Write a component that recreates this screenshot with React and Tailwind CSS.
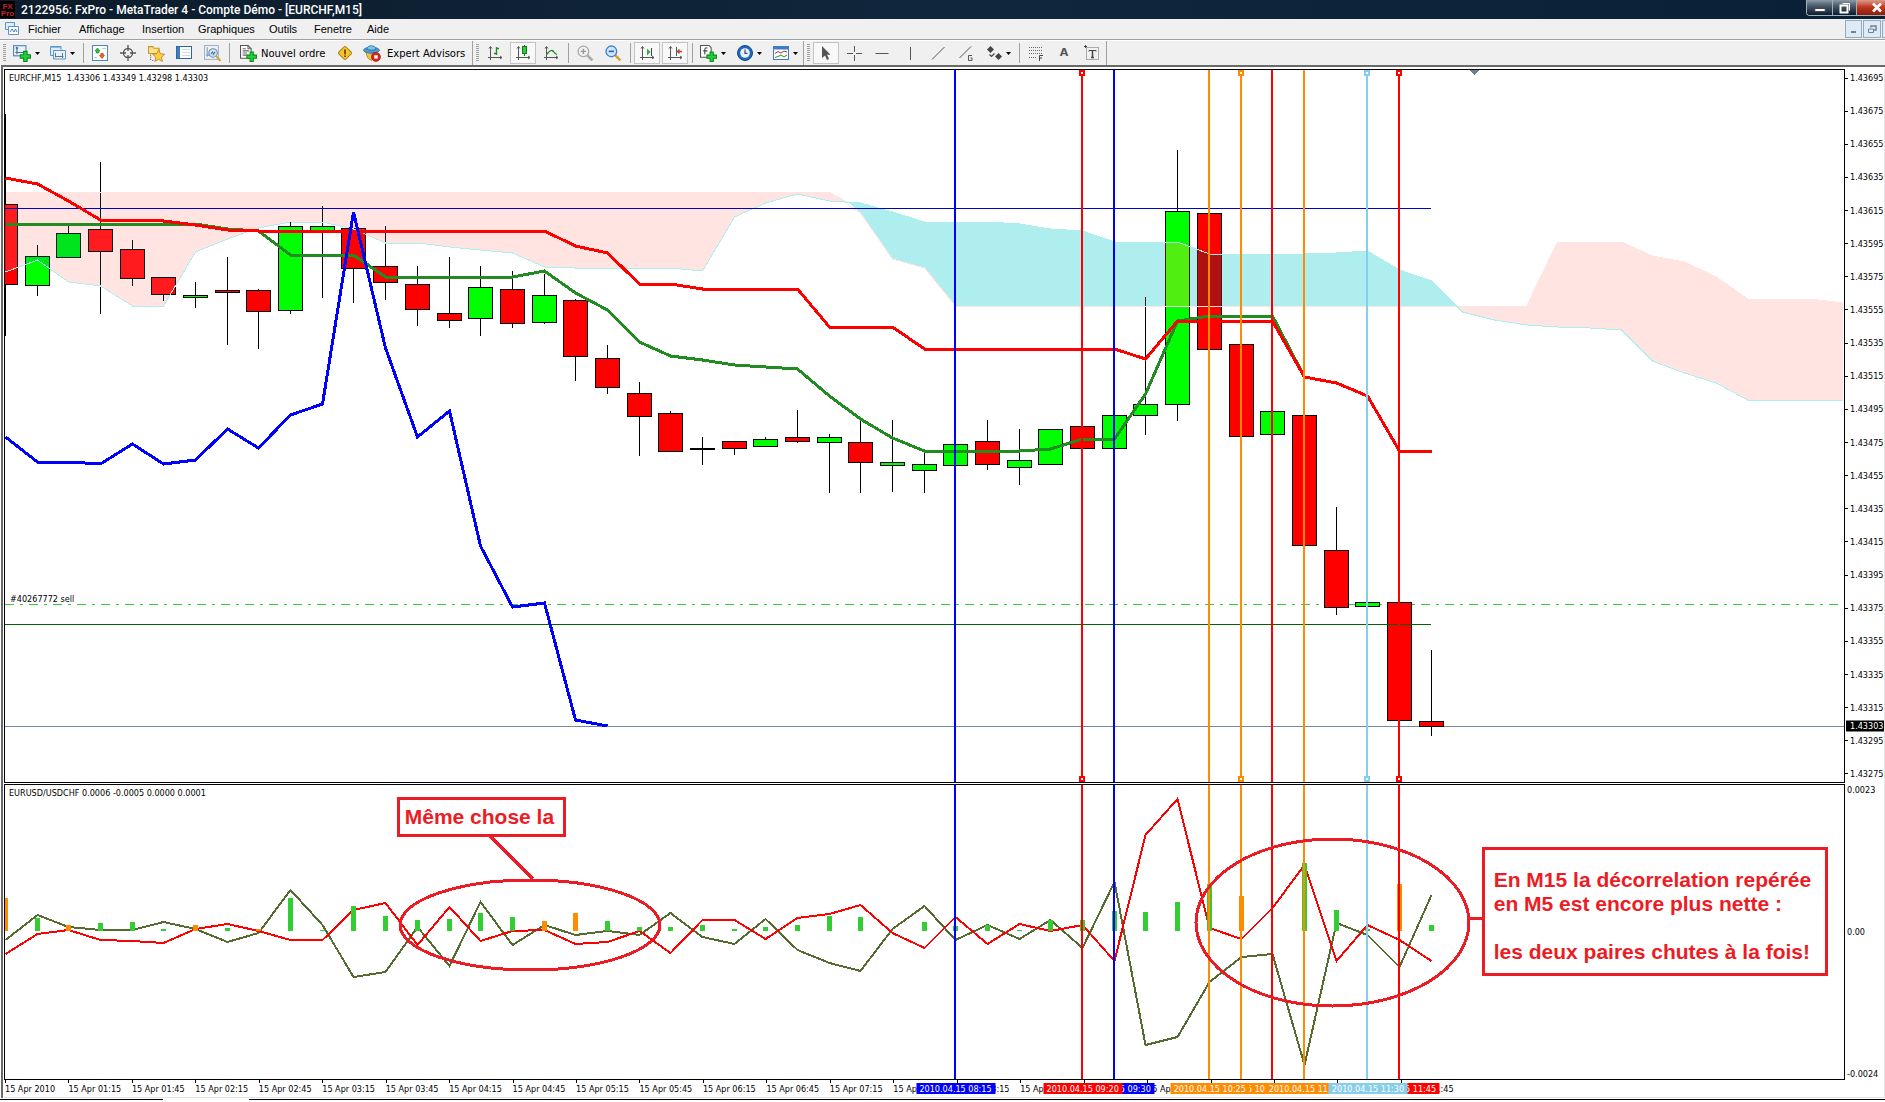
import clsx from "clsx";

const BAR_START = 5.5;
const BAR_STEP = 31.68;
const PLOT_LEFT = 5;
const PLOT_WIDTH = 1839;

const barX = (index) => Math.round(BAR_START + BAR_STEP * index - 0.5) + 0.5;
const leftPercent = (x) => `${((x - PLOT_LEFT) / PLOT_WIDTH) * 100}%`;
const toPoints = (values, start = 0) => values.map((y, i) => `${barX(i + start)},${y}`).join(" ");

const UP = "#00ff00";
const DOWN = "#ff0000";

// [open/close top, open/close bottom, high, low, color]
const candles = [
  [204.5, 284.5, 114, 336, DOWN],
  [256.5, 285.5, 245, 296, UP],
  [233.5, 257.5, 226, 257, UP],
  [229.5, 251.5, 162, 314, DOWN],
  [249.5, 278.5, 240, 286, DOWN],
  [277.5, 294.5, 277, 301, DOWN],
  [295.5, 297.5, 282, 308, UP],
  [290.5, 292.5, 257, 345, DOWN],
  [290.5, 311.5, 289, 349, DOWN],
  [226.5, 310.5, 222, 314, UP],
  [226.5, 231.5, 206, 298, UP],
  [228.5, 268.5, 228, 303, DOWN],
  [266.5, 282.5, 226, 300, DOWN],
  [284.5, 309.5, 266, 326, DOWN],
  [313.5, 320.5, 257, 328, DOWN],
  [287.5, 318.5, 266, 336, UP],
  [289.5, 323.5, 271, 328, DOWN],
  [295.5, 322.5, 274, 324, UP],
  [300.5, 356.5, 299, 381, DOWN],
  [358.5, 387.5, 345, 394, DOWN],
  [393.5, 416.5, 382, 456, DOWN],
  [413.5, 451.5, 411, 451, DOWN],
  [448.5, 449.5, 437, 465, UP],
  [441.5, 448.5, 441, 455, DOWN],
  [439.5, 446.5, 437, 446, UP],
  [437.5, 441.5, 410, 443, DOWN],
  [437.5, 442.5, 434, 493, UP],
  [442.5, 462.5, 420, 493, DOWN],
  [462.5, 465.5, 420, 492, UP],
  [464.5, 470.5, 452, 493, UP],
  [444.5, 465.5, 444, 465, UP],
  [441.5, 464.5, 420, 470, DOWN],
  [460.5, 467.5, 429, 485, UP],
  [429.5, 464.5, 429, 464, UP],
  [426.5, 448.5, 426, 448, DOWN],
  [415.5, 448.5, 415, 448, UP],
  [404.5, 415.5, 297, 435, UP],
  [211.5, 404.5, 150, 421, UP],
  [213.5, 349.5, 213, 349, DOWN],
  [344.5, 436.5, 344, 436, DOWN],
  [411.5, 434.5, 411, 434, UP],
  [415.5, 545.5, 415, 545, DOWN],
  [550.5, 607.5, 507, 615, DOWN],
  [602.5, 606.5, 602, 606, UP],
  [602.5, 720.5, 602, 720, DOWN],
  [721.5, 726.5, 650, 736, DOWN],
];

const spanA = [
  272, 260, 282, 286, 306, 306, 252, 239, 228, 222, 222, 229, 243, 243, 247, 250, 253, 267, 268, 268, 268, 268, 271,
  217, 203, 194, 201, 203, 212, 222, 222, 222, 224, 229, 231, 242, 242, 242, 254, 254, 254, 254, 253, 251, 270, 281,
  312, 320, 325, 327, 328, 330, 361, 373, 383, 400, 400, 400, 400,
];
const spanB = [
  ...Array(27).fill(192), 213, 259, 268, ...Array(19).fill(306), 242, 242, 242, 256, 262, 277, 299, 299, 299, 303,
];

const reversed = (values, from, to) =>
  values
    .map((y, i) => `${barX(i)},${y}`)
    .slice(from, to)
    .reverse()
    .join(" ");

const cloudDownLeft = `${toPoints(spanB.slice(0, 27))} 848,202 ${reversed(spanA, 0, 27)}`;
const cloudUp = `848,202 ${toPoints(spanA.slice(27, 46), 27)} 1455,306 ${reversed(spanB, 27, 46)}`;
const cloudDownRight = `1455,306 ${toPoints(spanB.slice(46), 46)} ${reversed(spanA, 46, 59)}`;

const kijun = [
  178, 184, 201, 220, 220, 221, 225, 230, ...Array(10).fill(231), 246, 253, 284, 284, 289, 289, 289, 289, 327, 327, 327,
  ...Array(7).fill(349), 359, 321, 321, 321, 321, 377, 383, 396, 451, 451,
];
const tenkan = [
  ...Array(7).fill(224), 229, 231, 255, 255, 255, ...Array(5).fill(277), 271, 293, 310, 342, 356, 360, 365, 367, 369,
  396, 419, 438, 451, 451, 451, 451, 449, 439, 439, 394, 321, 316, 316, 316, 377,
];
const chikou = [437, 462, 462, 464, 444, 464, 460, 429, 448, 415, 404, 212, 348, 437, 411, 546, 607, 603, 720, 726];

const eurusd = [
  954, 934, 930, 940, 941, 943, 929, 924, 931, 940, 940, 910, 903, 945, 907, 941, 931, 930, 944, 942, 931, 953, 920,
  920, 939, 918, 914, 905, 933, 948, 917, 944, 924, 931, 925, 961, 835, 799, 928, 939, 908, 865, 961, 925, 940, 961,
];
const usdchf = [
  940, 915, 927, 930, 930, 922, 929, 942, 933, 890, 925, 977, 972, 927, 966, 902, 945, 925, 935, 931, 935, 913, 937,
  944, 919, 950, 963, 971, 929, 906, 940, 925, 939, 920, 948, 882, 1045, 1037, 982, 957, 954, 1065, 923, 935, 967, 895,
];

const ZERO_Y = 931;
const histogram = [
  898, 918, 925, 923, 922, 929, 925, 928, 929, 898, 930, 906, 916, 920, 919, 913, 917, 921, 913, 921, 927, 927, 925,
  929, 927, 925, 916, 917, 931, 922, 926, 925, 930, 920, 920, 911, 912, 902, 884, 896, 931, 863, 910, 929, 884, 925,
];
const orangeBars = [0, 2, 6, 8, 17, 18, 39, 44];

const verticals = [
  { bar: 44, color: "#ff0000", tag: "bg-[#ff0000]", label: "2010.04.15 11:45", handle: true },
  { bar: 35, color: "#0000ff", tag: "bg-[#0000ff]", label: "2010.04.15 09:30" },
  { bar: 40, color: "#ff0000", tag: "bg-[#ff0000]", label: "2010.04.15 10:45" },
  { bar: 39, color: "#ff8c00", tag: "bg-[#ff8c00]", label: "2010.04.15 10:30", handle: true },
  { bar: 30, color: "#0000ff", tag: "bg-[#0000ff]", label: "2010.04.15 08:15" },
  { bar: 34, color: "#ff0000", tag: "bg-[#ff0000]", label: "2010.04.15 09:20", handle: true },
  { bar: 38, color: "#ff8c00", tag: "bg-[#ff8c00]", label: "2010.04.15 10:25" },
  { bar: 41, color: "#ff8c00", tag: "bg-[#ff8c00]", label: "2010.04.15 11:00" },
  { bar: 43, color: "#87ceeb", tag: "bg-[#87ceeb]", label: "2010.04.15 11:30", handle: true },
];

const priceLabels = Array.from({ length: 22 }, (_, i) => (1.43695 - i * 0.0002).toFixed(5));

const timeLabels = Array.from({ length: 23 }, (_, i) => {
  if (i === 0) return "15 Apr 2010";
  const minutes = 45 + i * 30;
  return `15 Apr ${String(Math.floor(minutes / 60)).padStart(2, "0")}:${String(minutes % 60).padStart(2, "0")}`;
});

const menuItems = [
  { label: "Fichier", width: "w-[51px]" },
  { label: "Affichage", width: "w-[63px]" },
  { label: "Insertion", width: "w-14" },
  { label: "Graphiques", width: "w-[71px]" },
  { label: "Outils", width: "w-[45px]" },
  { label: "Fenetre", width: "w-[53px]" },
  { label: "Aide", width: "w-10" },
];

function Svg({ size = 16, children, ...props }) {
  return (
    <svg width={size} height={size} viewBox="0 0 16 16" fill="none" className="shrink-0" aria-hidden="true" {...props}>
      {children}
    </svg>
  );
}

const Plus = ({ x = 6, y = 6 }) => (
  <path
    transform={`translate(${x} ${y})`}
    d="M3.5 .5h3v3h3v3h-3v3h-3v-3h-3v-3h3z"
    fill="#22d43a"
    stroke="#0a8a1c"
  />
);

const NewChartIcon = () => (
  <Svg size={18}>
    <rect x=".5" y="1.5" width="11" height="9" fill="#eaf3fb" stroke="#4b86bd" />
    <path d="M3.5 3v6M2 7.5h8M2.500 4l1-1 1 1" stroke="#4b6f96" />
    <Plus />
  </Svg>
);

const ProfilesIcon = () => (
  <Svg>
    <path d="M.5 1.500h10.500v9H.5z" fill="#dcecf9" stroke="#5d93c6" />
    <path d="M.5 2.500h10.500" stroke="#8db9e0" />
    <path d="M3.500 5.500h12v8.500h-12z" fill="#eaf3fb" stroke="#5d93c6" />
    <path d="M5.500 12.500V8M5 11.500h8.500M12.500 13V8" stroke="#55789e" />
  </Svg>
);

const MarketIcon = () => (
  <Svg>
    <rect x=".5" y=".5" width="15" height="15" fill="#fff" stroke="#4b86bd" />
    <path d="M3 6L5.500 3l2.500 3H6.800V8H4.300V6z" fill="#2fbf3c" stroke="#14791f" strokeWidth=".6" />
    <path d="M7.500 10.500L10 13.500l2.500-3h-1.200V8.500H8.800v2z" fill="#f0602c" stroke="#a93410" strokeWidth=".6" />
    <path d="M10 3.500h4M2 12.500h3" stroke="#b9c9d8" />
  </Svg>
);

const CrosshairIcon = () => (
  <Svg>
    <circle cx="8" cy="8" r="4.500" stroke="#555" strokeWidth="1.300" />
    <path d="M8 0v6M8 10v6M0 8h6M10 8h6" stroke="#555" strokeWidth="1.300" />
  </Svg>
);

const NavigatorIcon = () => (
  <Svg size={17}>
    <path d="M.5 2.500V1.500h4l1 1.500h5v5H.5z" fill="#ffe08a" stroke="#c99a2c" />
    <path d="M2.500 9v6M4 14.500h2" stroke="#666" strokeDasharray="1 1" />
    <path d="M10 4.500l1.700 3.700 4 .5-3 2.700.8 4-3.500-2-3.500 2 .8-4-3-2.700 4-.5z" fill="#ffcf3f" stroke="#b8831a" strokeWidth=".8" />
  </Svg>
);

const TerminalIcon = () => (
  <Svg>
    <rect x=".5" y="1.500" width="15" height="12" fill="#fff" stroke="#2d65a8" />
    <rect x="1" y="2" width="3" height="11" fill="#3f7cc4" />
    <path d="M6 4.500h8M6 7.500h8M6 10.500h8" stroke="#c9d9e8" />
  </Svg>
);

const TesterIcon = () => (
  <Svg size={17}>
    <rect x=".5" y=".5" width="13" height="13" fill="#eef4fa" stroke="#9db4c9" />
    <path d="M3 2v9M2 9.500h9" stroke="#7c96ae" />
    <circle cx="8.500" cy="7.500" r="4" fill="#c6def2" fillOpacity=".8" stroke="#6f8da8" />
    <path d="M6.500 8.500l1.500-2 1 2 1.500-2" stroke="#4c7297" />
    <path d="M11.500 10.500l4 4.500" stroke="#d9a43c" strokeWidth="2" />
  </Svg>
);

const OrderIcon = () => (
  <Svg size={17}>
    <path d="M.5.5h7l3 3v9h-10z" fill="#fff" stroke="#555" />
    <path d="M7.500.5v3h3M2.500 3.500h3M2.500 5.500h6M2.500 7.500h4M2.500 9.500h4" stroke="#666" />
    <Plus />
  </Svg>
);

const WarningIcon = () => (
  <Svg>
    <rect x="3" y="3" width="10" height="10" rx="1.500" transform="rotate(45 8 8)" fill="#f6c52e" stroke="#a8780f" />
    <path d="M8 4.500v5M8 10.500v1.500" stroke="#5a3f05" strokeWidth="1.600" />
  </Svg>
);

const ExpertIcon = () => (
  <Svg size={18}>
    <path d="M2.500 6.500c1 6 2.500 7.500 5.500 8l4-5z" fill="#f3c443" stroke="#a97c18" strokeWidth=".7" />
    <ellipse cx="7.500" cy="5.500" rx="7" ry="2.700" fill="#4a9bd3" stroke="#2a6d9f" strokeWidth=".7" />
    <path d="M3.500 4.500c0-4 7.500-4 8 0-2 1.300-6 1.300-8 0z" fill="#7fc1ea" stroke="#2a6d9f" strokeWidth=".7" />
    <circle cx="11.500" cy="11.500" r="4" fill="#d9261c" stroke="#94130c" strokeWidth=".6" />
    <rect x="10" y="10" width="3" height="3" fill="#fff" />
  </Svg>
);

function ChartAxes() {
  return <path d="M3.500 2v13M1 12.500h14M2 3.500l1.500-2 1.500 2M13 11l2 1.500-2 1.500" stroke="#555" />;
}

const BarChartIcon = () => (
  <Svg>
    <ChartAxes />
    <path d="M9.500 2v8M9.500 3.500h2.500M7 8.500h2.500" stroke="#1c8c26" strokeWidth="1.400" />
  </Svg>
);

const CandleChartIcon = () => (
  <Svg>
    <ChartAxes />
    <path d="M9.500 0v11" stroke="#147a1e" />
    <rect x="7.500" y="1.500" width="4" height="7" fill="#2fcf3c" stroke="#147a1e" />
  </Svg>
);

const LineChartIcon = () => (
  <Svg>
    <ChartAxes />
    <path d="M3.500 9.500C6 7 7 5 9 5.500S11 8.500 14 9.500" stroke="#1c8c26" strokeWidth="1.300" />
  </Svg>
);

const ZoomInIcon = () => (
  <Svg size={17}>
    <path d="M9.500 9.500l5 5" stroke="#aaa" strokeWidth="2.500" />
    <circle cx="6" cy="6" r="5" fill="#f0f0f0" stroke="#a8a8a8" strokeWidth="1.200" />
    <path d="M3.500 6h5M6 3.500v5" stroke="#999" strokeWidth="1.400" />
  </Svg>
);

const ZoomOutIcon = () => (
  <Svg size={17}>
    <path d="M9.500 9.500l5 5" stroke="#d8a430" strokeWidth="2.500" />
    <circle cx="6" cy="6" r="5" fill="#cfe6fa" stroke="#3d84cf" strokeWidth="1.300" />
    <path d="M3.500 6h5" stroke="#2b6cb5" strokeWidth="1.600" />
  </Svg>
);

const AutoScrollIcon = () => (
  <Svg>
    <ChartAxes />
    <path d="M8 3.500v7l3.500-3.500z" fill="#2fae3a" />
    <path d="M12.500 3v8" stroke="#444" />
  </Svg>
);

const ChartShiftIcon = () => (
  <Svg>
    <ChartAxes />
    <path d="M9.500 2v9" stroke="#33628f" />
    <path d="M15 6.500h-4M12.500 4.500l-2 2 2 2" stroke="#c4451c" strokeWidth="1.300" />
  </Svg>
);

const IndicatorsIcon = () => (
  <Svg size={17}>
    <path d="M.5.500h8l2 2v9h-10z" fill="#fff" stroke="#555" />
    <path d="M7 3c-2-1-2.500 0-2.500 2v4M3 5.500h4" stroke="#444" />
    <Plus />
  </Svg>
);

const PeriodIcon = () => (
  <Svg>
    <circle cx="8" cy="8" r="7.500" fill="#1f67bd" stroke="#164a8c" />
    <circle cx="8" cy="8" r="4.800" fill="#e8f3fc" />
    <path d="M8 4.500V8.300h2.500" stroke="#35506e" strokeWidth="1.200" />
  </Svg>
);

const TemplateIcon = () => (
  <Svg>
    <rect x=".5" y="1.500" width="15" height="13" fill="#fff" stroke="#3f7cc4" />
    <path d="M1 3h14" stroke="#3f7cc4" strokeWidth="3" />
    <path d="M2 8.500l3-2 3 1.500 3-2 3 1" stroke="#a3352a" />
    <path d="M2 12.500l3-1 3-1.500 3 2 3-2" stroke="#2d8b38" />
  </Svg>
);

const CursorIcon = () => (
  <Svg>
    <path d="M4 1v12l3-2.500 2 4.500 2-1-2-4.200h3.500z" fill="#555" />
  </Svg>
);

const CrossIcon = () => (
  <Svg>
    <path d="M8.500 1v6M8.500 10v6M1 8.500h6M10 8.500h6" stroke="#555" />
  </Svg>
);

const HLineIcon = () => (
  <Svg>
    <path d="M1.500 8.500h13" stroke="#555" />
  </Svg>
);

const VLineIcon = () => (
  <Svg>
    <path d="M8.500 2v13" stroke="#555" />
  </Svg>
);

const TrendIcon = () => (
  <Svg>
    <path d="M2 14.500L14.500 2" stroke="#555" />
  </Svg>
);

const ChannelIcon = () => (
  <Svg>
    <path d="M1.500 13L13 1.500" stroke="#555" />
    <path d="M14 10.500h-3.500v5H14V13h-1.500" stroke="#555" />
  </Svg>
);

const ArrowsIcon = () => (
  <Svg>
    <path d="M4.500 1L8 4.500 4.500 8 1 4.500z" fill="#444" />
    <path d="M12.500 8L16 11.500 12.500 15 9 11.500z" fill="#444" />
    <path d="M3.500 9.500l2 2 3-3" stroke="#444" strokeWidth="1.200" />
  </Svg>
);

const FiboIcon = () => (
  <Svg>
    <path d="M1 2.500h14M1 5.500h14M1 8.500h14M1 12.500h8" stroke="#666" strokeDasharray="1 1" />
    <path d="M11.500 16v-5.500H15M11.500 13H14" stroke="#444" />
  </Svg>
);

const LabelIcon = () => (
  <Svg>
    <rect x="2.500" y="2.500" width="12" height="12" stroke="#666" strokeDasharray="1 1" />
    <path d="M5 6.500V5.500h7v1" stroke="#444" />
    <path d="M8.500 5.500v7M7 12.500h3" stroke="#444" strokeWidth="1.500" />
    <path d="M0 1.500h3M1.500 0v3" stroke="#444" />
  </Svg>
);

const Caret = () => (
  <svg width="5" height="3" viewBox="0 0 5 3" className="shrink-0" aria-hidden="true">
    <path d="M0 0h5L2.500 3z" fill="#000" />
  </svg>
);

function ToolButton({ label, icon, pressed = false, menu = false }) {
  return (
    <button
      type="button"
      aria-label={label}
      aria-pressed={pressed}
      className={clsx("flex h-[22px] shrink-0 items-center justify-center", menu ? "w-9 gap-1" : "w-7")}
    >
      {pressed ? (
        <span className="flex h-[22px] w-[26px] items-center justify-center border border-[#c4c4c4] bg-[#f8f8f8]">
          {icon}
        </span>
      ) : (
        icon
      )}
      {menu && <Caret />}
    </button>
  );
}

const Separator = () => (
  <span className="flex w-1.5 shrink-0 justify-center">
    <span className="h-5 w-px bg-[#a0a0a0]" />
  </span>
);

const Grip = () => (
  <span className="flex w-2 shrink-0 justify-center">
    <span className="h-[18px] w-[3px] bg-[repeating-linear-gradient(to_bottom,#a0a0a0_0_1px,#f0f0f0_1px_2px)]" />
  </span>
);

function ToolbarGroup({ label, children }) {
  return (
    <div role="toolbar" aria-label={label} className="flex h-full items-center border-r border-[#a0a0a0]">
      <Grip />
      {children}
    </div>
  );
}

function Toolbar() {
  return (
    <div className="flex h-6 shrink-0 items-center overflow-hidden bg-[#f0f0f0] font-['DejaVu_Sans'] text-[10px]">
      <ToolbarGroup label="Standard">
        <ToolButton label="Nouveau graphique" icon={<NewChartIcon />} menu />
        <ToolButton label="Profils" icon={<ProfilesIcon />} menu />
        <Separator />
        <ToolButton label="Cotations" icon={<MarketIcon />} />
        <ToolButton label="Fenêtre de données" icon={<CrosshairIcon />} />
        <ToolButton label="Navigateur" icon={<NavigatorIcon />} />
        <ToolButton label="Terminal" icon={<TerminalIcon />} />
        <ToolButton label="Testeur" icon={<TesterIcon />} />
        <Separator />
        <button type="button" className="flex h-[22px] w-[99px] shrink-0 items-center gap-1 pl-2 whitespace-nowrap">
          <OrderIcon />
          Nouvel ordre
        </button>
        <ToolButton label="Alertes" icon={<WarningIcon />} />
        <button type="button" className="flex h-[22px] w-[113px] shrink-0 items-center gap-1.5 pl-1 whitespace-nowrap">
          <ExpertIcon />
          Expert Advisors
        </button>
      </ToolbarGroup>

      <ToolbarGroup label="Graphiques">
        <ToolButton label="Barres" icon={<BarChartIcon />} />
        <ToolButton label="Chandeliers" icon={<CandleChartIcon />} pressed />
        <ToolButton label="Ligne" icon={<LineChartIcon />} />
        <Separator />
        <ToolButton label="Zoom avant" icon={<ZoomInIcon />} />
        <ToolButton label="Zoom arrière" icon={<ZoomOutIcon />} />
        <Separator />
        <ToolButton label="Défilement automatique" icon={<AutoScrollIcon />} pressed />
        <ToolButton label="Décalage" icon={<ChartShiftIcon />} pressed />
        <Separator />
        <ToolButton label="Indicateurs" icon={<IndicatorsIcon />} menu />
        <ToolButton label="Périodes" icon={<PeriodIcon />} menu />
        <ToolButton label="Modèles" icon={<TemplateIcon />} menu />
      </ToolbarGroup>

      <ToolbarGroup label="Outils de dessin">
        <ToolButton label="Curseur" icon={<CursorIcon />} pressed />
        <ToolButton label="Réticule" icon={<CrossIcon />} />
        <ToolButton label="Ligne horizontale" icon={<HLineIcon />} />
        <ToolButton label="Ligne verticale" icon={<VLineIcon />} />
        <ToolButton label="Ligne de tendance" icon={<TrendIcon />} />
        <ToolButton label="Canal" icon={<ChannelIcon />} />
        <ToolButton label="Flèches" icon={<ArrowsIcon />} menu />
        <Separator />
        <ToolButton label="Fibonacci" icon={<FiboIcon />} />
        <ToolButton label="Texte" icon={<span className="text-[11px] font-bold text-[#555]">A</span>} />
        <ToolButton label="Étiquette" icon={<LabelIcon />} />
      </ToolbarGroup>
    </div>
  );
}

function TitleBar() {
  return (
    <header className="flex h-[19px] shrink-0 items-start justify-between bg-[#0b1f33] bg-linear-to-r from-[#0c1c2c] via-[#10263c] to-[#0a2036]">
      <div className="flex h-[19px] items-center gap-1.5">
        <span className="flex h-[17px] w-[15px] flex-col items-center justify-center bg-black font-['Liberation_Sans'] text-[8px] leading-[7px] font-bold text-[#c8202a]">
          <span>FX</span>
          <span>Pro</span>
        </span>
        <h1 className="font-['Roboto'] text-[12px] leading-[18px] font-medium whitespace-nowrap text-white">
          2122956: FxPro - MetaTrader 4 - Compte Démo - [EURCHF,M15]
        </h1>
      </div>
      <div className="flex h-4 overflow-hidden rounded-bl border-b border-l border-[#9fb0bf]">
        <button type="button" aria-label="Réduire" className="flex w-[26px] items-center justify-center border-r border-[#9fb0bf] bg-linear-to-b from-[#8d99a5] via-[#4a5a6a] via-40% to-[#0c1c2e]">
          <span className="mt-1 h-1 w-3 rounded-xs border border-[#445] bg-white" />
        </button>
        <button type="button" aria-label="Restaurer" className="flex w-6 items-center justify-center border-r border-[#9fb0bf] bg-linear-to-b from-[#8d99a5] via-[#4a5a6a] via-40% to-[#0c1c2e]">
          <svg width="12" height="12" viewBox="0 0 12 12" fill="none" aria-hidden="true">
            <path d="M3.500 1.500h7v7" stroke="#fff" />
            <rect x="1.500" y="3.500" width="7" height="7" stroke="#fff" strokeWidth="2" />
          </svg>
        </button>
        <button type="button" aria-label="Fermer" className="flex w-7 items-center justify-end bg-linear-to-b from-[#d99a8c] via-[#c0391f] via-45% to-[#8a1c0c] pr-0.5">
          <svg width="12" height="11" viewBox="0 0 12 11" aria-hidden="true">
            <path d="M2 1.500l8 8M10 1.500l-8 8" stroke="#fff" strokeWidth="2.600" />
          </svg>
        </button>
      </div>
    </header>
  );
}

function MenuBar() {
  return (
    <div className="flex h-[22px] shrink-0 items-start justify-between overflow-hidden border-b border-white bg-[#f0f0f0]">
      <div className="flex h-[21px] flex-1 items-center border-b border-[#a0a0a0] pl-[5px]">
        <Svg>
          <path d="M.5 1.500h9v7h-9z" fill="#dcecf9" stroke="#5d93c6" />
          <path d="M3.500 5.500h10v8h-10z" fill="#fff" stroke="#5d93c6" />
          <path d="M5 11l2-3 2 3 1.500-3L12 11" stroke="#3f7cc4" />
        </Svg>
        <nav className="flex pl-[7px] font-['Liberation_Sans'] text-[11px] leading-4 text-black">
          {menuItems.map((item) => (
            <a key={item.label} href="#" className={clsx("whitespace-nowrap", item.width)}>
              {item.label}
            </a>
          ))}
        </nav>
      </div>
      <div className="flex h-[21px] w-10 items-start gap-px overflow-hidden border-b border-[#a0a0a0] pt-px">
        <button type="button" aria-label="Réduire le graphique" className="flex h-[18px] w-[17px] shrink-0 items-end justify-center border border-[#93a9bd] bg-[#deebf7] pb-1">
          <span className="h-0.5 w-[5px] bg-[#6f8296]" />
        </button>
        <button type="button" aria-label="Restaurer le graphique" className="flex h-[18px] w-[18px] shrink-0 items-center justify-center border border-[#93a9bd] bg-[#deebf7]">
          <svg width="9" height="8" viewBox="0 0 9 8" fill="none" aria-hidden="true">
            <path d="M3 2.500V1h5v4H6" stroke="#6f8296" strokeWidth="1.500" />
            <path d="M.5 4h5v3.500h-5z" stroke="#6f8296" />
          </svg>
        </button>
        <button type="button" aria-label="Fermer le graphique" className="h-[18px] w-[17px] shrink-0 border border-[#93a9bd] bg-[#deebf7]" />
      </div>
    </div>
  );
}

function VerticalLines({ top, bottom, handles = false }) {
  return verticals.map(({ bar, color, handle }) => {
    const x = barX(bar) - 0.5;
    return (
      <g key={bar} stroke={color} strokeWidth="2">
        <line x1={x} x2={x} y1={top} y2={bottom} />
        {handles && handle && (
          <>
            <rect x={x - 2} y={top + 1} width="4" height="4" fill="#fff" />
            <rect x={x - 2} y={bottom - 5} width="4" height="4" fill="#fff" />
          </>
        )}
      </g>
    );
  });
}

function PriceChart() {
  return (
    <svg
      viewBox="5 70 1839 712"
      preserveAspectRatio="none"
      shapeRendering="crispEdges"
      fill="none"
      className="absolute inset-0 isolate size-full"
      role="img"
      aria-label="EURCHF M15"
    >
      <rect x="5" y="70" width="1839" height="712" fill="#fff" />
      <line x1="5" x2="1844" y1="726.5" y2="726.5" stroke="#778899" />
      <line x1="5" x2="1844" y1="604.5" y2="604.5" stroke="#32cd32" strokeDasharray="9 6 3 6" />

      {candles.map(([top, bottom, high, low, color], i) => (
        <g key={i} stroke="#000">
          <line x1={barX(i)} x2={barX(i)} y1={high} y2={low} />
          <rect x={barX(i) - 12} y={top} width="24" height={bottom - top} fill={color} />
        </g>
      ))}

      {/* the Ichimoku cloud inverts whatever lies below it */}
      <g className="mix-blend-difference">
        <polygon points={cloudDownLeft} fill="#001b1e" />
        <polygon points={cloudUp} fill="#501111" />
        <polygon points={cloudDownRight} fill="#001b1e" />
      </g>
      <polyline points={toPoints(spanB)} stroke="#ffe4e1" />
      <polyline points={toPoints(spanA)} stroke="#afeeee" />

      <line x1="5" x2="1431" y1="208.5" y2="208.5" stroke="#0000cd" />
      <line x1="5" x2="1431" y1="624.5" y2="624.5" stroke="#006400" />

      <g strokeWidth="3">
        <polyline points={toPoints(tenkan)} stroke="#228b22" />
        <polyline points={toPoints(kijun)} stroke="#ff0000" />
        <polyline points={toPoints(chikou)} stroke="#0000ff" />
      </g>

      <VerticalLines top={70} bottom={782} handles />
      <path d="M1470 70h9l-4.500 5z" fill="#708090" />
    </svg>
  );
}

function IndicatorChart() {
  return (
    <svg
      viewBox="5 785 1839 294"
      preserveAspectRatio="none"
      shapeRendering="crispEdges"
      fill="none"
      className="absolute inset-0 size-full"
      role="img"
      aria-label="EURUSD/USDCHF"
    >
      <g strokeWidth="2">
        <polyline points={toPoints(usdchf)} stroke="#556b2f" />
        <polyline points={toPoints(eurusd)} stroke="#ff0000" />
      </g>
      {histogram.map((y, i) => (
        <rect
          key={i}
          x={barX(i) - 2.5}
          y={y}
          width="5"
          height={ZERO_Y - y}
          fill={orangeBars.includes(i) ? "#ff8c00" : "#32cd32"}
        />
      ))}
      <VerticalLines top={785} bottom={1079} />
      <g stroke="#ed1c24" strokeWidth="3">
        <ellipse cx="530" cy="925" rx="130" ry="45" />
        <ellipse cx="1332.5" cy="922.5" rx="136.500" ry="83.500" />
        <path d="M490 836l43 43M1469 918.500h13" />
      </g>
    </svg>
  );
}

const AXIS_TEXT = "font-['DejaVu_Sans_Condensed','DejaVu_Sans',sans-serif] text-[9px] leading-3 text-black";

function PriceAxis() {
  return (
    <div className="relative flex w-[39px] shrink-0 flex-col justify-between py-[3px]">
      {priceLabels.map((label) => (
        <div key={label} className="flex h-3 items-center gap-0.5">
          <span className="h-px w-[3px] bg-black" />
          {label}
        </div>
      ))}
      <span className="absolute top-[92%] right-0 left-px flex h-[11px] -translate-y-1/2 items-center bg-black pl-1 text-white">
        1.43303
      </span>
    </div>
  );
}

function TimeAxis() {
  return (
    <div className="relative mr-[39px] h-[17px]">
      <div className="grid grid-cols-[repeat(29,minmax(0,1fr))] pl-px">
        {timeLabels.map((label) => (
          <span key={label} className="whitespace-nowrap">
            <span className="block h-[3px] w-px bg-black" />
            {label}
          </span>
        ))}
      </div>
      {verticals.map(({ bar, tag, label }) => (
        <span
          key={bar}
          className={clsx(
            "absolute top-[3px] flex h-[11px] w-[79px] -translate-x-1/2 items-center justify-center whitespace-nowrap text-white",
            tag
          )}
          style={{ left: leftPercent(barX(bar)) }}
        >
          {label}
        </span>
      ))}
    </div>
  );
}

function Note({ className, children }) {
  return (
    <div
      className={clsx(
        "absolute border-3 border-[#ed1c24] bg-white font-['Liberation_Sans'] text-[21px] leading-6 font-bold whitespace-nowrap text-[#ed1c24]",
        className
      )}
    >
      {children}
    </div>
  );
}

export default function App() {
  return (
    <div className="flex h-screen min-h-[600px] flex-col overflow-hidden bg-white">
      <TitleBar />
      <MenuBar />
      <Toolbar />

      <main className={clsx("ml-px flex min-h-0 flex-1 flex-col border-t-2 border-l-2 border-[#696969] pt-0.5 pl-px", AXIS_TEXT)}>
        <div className="flex min-h-0 flex-1 flex-col border-r border-b border-[#e3e3e3]">
          <section className="flex min-h-0 flex-[714]">
            <div className="relative min-w-0 flex-1 border border-black">
              <PriceChart />
              <p className="relative pt-0.5 pl-1 whitespace-pre">EURCHF,M15  1.43306 1.43349 1.43298 1.43303</p>
              <span className="absolute top-[73.400%] left-[5px]">#40267772 sell</span>
            </div>
            <PriceAxis />
          </section>

          <section className="mt-px flex min-h-0 flex-[296]">
            <div className="relative min-w-0 flex-1 border border-black">
              <IndicatorChart />
              <p className="relative pt-0.5 pl-1 whitespace-pre">EURUSD/USDCHF 0.0006 -0.0005 0.0000 0.0001</p>
              <Note className="top-[4%] left-[21.300%] w-[169px] px-[5px] py-[5px]">Même chose la</Note>
              <Note className="top-[21%] left-[80.300%] w-[346px] px-[9px] pt-[18px] pb-[9px]">
                <p>En M15 la décorrelation repérée</p>
                <p>en M5 est encore plus nette :</p>
                <p className="pt-6">les deux paires chutes à la fois!</p>
              </Note>
            </div>
            <div className="flex w-[39px] shrink-0 flex-col justify-between pl-0.5">
              <span>0.0023</span>
              <span>0.00</span>
              <span>-0.0024</span>
            </div>
          </section>

          <TimeAxis />
        </div>
      </main>

      <footer className="mt-px mb-0.5 flex h-px shrink-0">
        <span className="w-[163px] bg-black" />
        <span className="ml-[86px] flex-1 bg-black" />
      </footer>
    </div>
  );
}
